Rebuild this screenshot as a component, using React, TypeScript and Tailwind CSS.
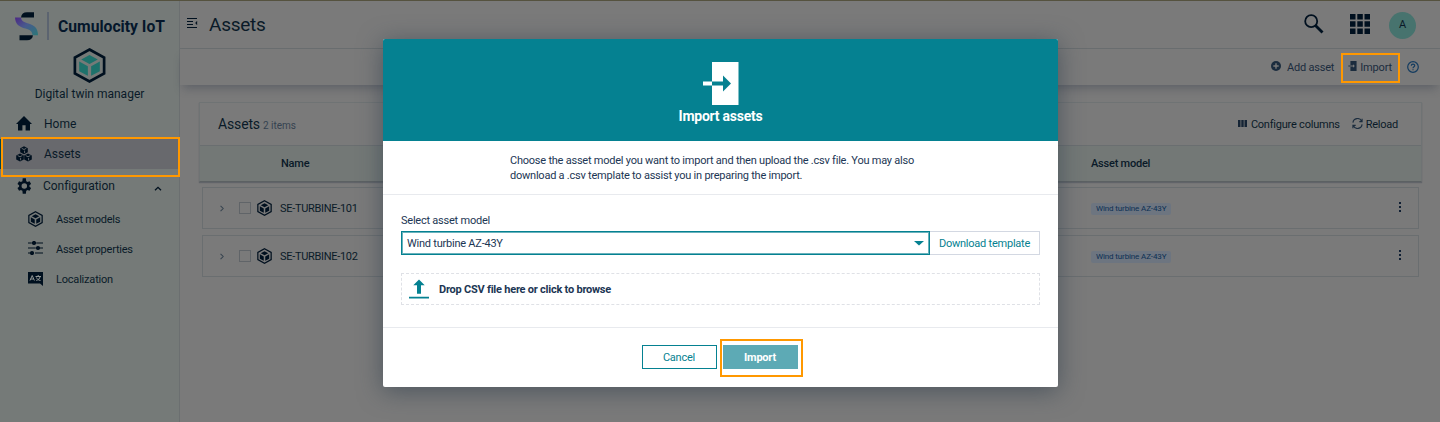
import React from "react";

function Cube({ className, fill = "#00101f", teal = false }: { className: string; fill?: string; teal?: boolean }) {
  const inner = teal ? "#1d716b" : fill;
  return (
    <svg viewBox="0 0 32 34" className={className} fill="none">
      <path d="M16 1.5 30.2 9.3V24.7L16 32.5 1.8 24.7V9.3Z" stroke={fill} strokeWidth="2.6" />
      <path d="M16 6.8 24 11.2 16 15.6 8 11.2Z" fill={inner} />
      <path d="M6 13.2 14.4 17.8V27L6 22.6Z" fill={inner} />
      <path d="M26 13.2 17.6 17.8V27L26 22.6Z" fill={inner} />
    </svg>
  );
}

function Logo() {
  return (
    <svg viewBox="0 0 24 29" className="h-[29px] w-[24px]">
      <defs>
        <linearGradient id="wave" x1="0" y1="0" x2="1" y2="1">
          <stop offset="0" stopColor="#4c2784" />
          <stop offset=".45" stopColor="#48598d" />
          <stop offset="1" stopColor="#2b7878" />
        </linearGradient>
      </defs>
      <path d="M6 5.5C6.3 2 8.5.3 12 .3H19V5.5Z" fill="#00101f" />
      <path d="M18 23.2C17.5 26.7 15.5 28.3 12 28.3H4.5V23.2Z" fill="#00101f" />
      <path d="M0 5.5H6C6.4 9 8.6 10 12.5 11.2 19.5 13 23 16.2 23 23.2H17.5C17.2 19.3 14.8 17.8 10.5 16.6 4 14.8.3 12.2 0 5.5Z" fill="url(#wave)" />
    </svg>
  );
}

function ImportIcon({ className, door, arrow }: { className: string; door: string; arrow: string }) {
  return (
    <svg viewBox="0 0 36 43" className={className}>
      <path d="M9 0H35.5V43H9Z" fill={door} />
      <path d="M0 19.5H9V23.5H0Z" fill={door} />
      <path d="M9 19.5H20V13.5L28 21.5 20 29.5V23.5H9Z" fill={arrow} />
    </svg>
  );
}

function Gear() {
  return (
    <svg viewBox="3 2 18 20" className="h-[16px] w-[15px]" fill="#00101f" preserveAspectRatio="none">
      <path d="M19.14 12.94a7 7 0 0 0 0-1.88l2.03-1.58-1.92-3.32-2.39.96a7 7 0 0 0-1.62-.94L14.88 2.4h-3.84l-.36 3.78c-.59.24-1.13.57-1.62.94l-2.39-.96-1.92 3.32 2.03 1.58a7 7 0 0 0 0 1.88l-2.03 1.58 1.92 3.32 2.39-.96c.5.38 1.03.7 1.62.94l.36 3.78h3.84l.36-3.78a7 7 0 0 0 1.62-.94l2.39.96 1.92-3.32ZM12.96 15.3a3.3 3.3 0 1 1 0-6.6 3.3 3.3 0 0 1 0 6.6Z" />
    </svg>
  );
}

function Sidebar() {
  return (
    <aside className="flex w-[180px] shrink-0 flex-col border-r border-[#6b6f70] bg-[#757a78] text-[#0a1a28]">
      <div className="mt-[12px] flex h-[28px] items-center pl-[15px]">
        <Logo />
        <div className="ml-[8px] h-[28px] w-[2px] bg-[#5c6470]" />
        <div className="ml-[9px] whitespace-nowrap pt-[2px] text-[15.7px] font-bold text-[#05172b]">Cumulocity IoT</div>
      </div>
      <div className="mt-[8px] flex flex-col items-center">
        <Cube className="h-[35px] w-[33px]" teal />
        <div className="mt-[2px] text-[12px] leading-[18px]">Digital twin manager</div>
      </div>
      <nav className="mt-[6px] text-[12px]">
        <div className="flex h-[30px] items-center pl-[16px]">
          <svg viewBox="0 0 16 15" className="mb-px h-[15px] w-[16px]" fill="#00101f"><path d="M8 0 16 8H14V14.5H9.6V9.3H6.4V14.5H2V8H0Z" /></svg>
          <span className="ml-[12px]">Home</span>
        </div>
        <div className="flex h-[30px] items-center bg-[#68696d] pl-[16px] shadow-[inset_1px_0_0_#04454f]">
          <svg viewBox="0 0 16 16" className="h-[16px] w-[16px]">
            {[[8, 4.2], [4, 11.5], [12, 11.5]].map(([x, y]) => (
              <g key={`${x}-${y}`} transform={`translate(${x} ${y})`}>
                <path d="M0-4 3.8-2V2L0 4-3.8 2V-2Z" fill="#00101f" />
                <path d="M-2.3-1.9 0-.7 2.3-1.9M.6.4V2.8" fill="none" stroke="#777b7c" strokeWidth=".8" />
              </g>
            ))}
          </svg>
          <span className="ml-[12px]">Assets</span>
        </div>
        <div className="mt-[2px] flex h-[30px] items-center pl-[16px]">
          <Gear />
          <span className="ml-[12px] tracking-[-0.05px]">Configuration</span>
          <svg viewBox="0 0 8 5" className="ml-auto mr-[17px] mt-[5px] h-[5px] w-[8px]" fill="none" stroke="#00101f" strokeWidth="1.3"><path d="M1 4.3 4 1.3 7 4.3" /></svg>
        </div>
        <div className="mt-[3px] text-[11px] tracking-[-0.24px]">
          <div className="flex h-[30px] items-center pl-[28px]">
            <Cube className="mb-px h-[16px] w-[15px]" />
            <span className="ml-[13px] pt-[2px]">Asset models</span>
          </div>
          <div className="flex h-[30px] items-center pl-[28px]">
            <svg viewBox="0 0 15 14" className="mb-[2px] h-[14px] w-[15px]" stroke="#00101f" fill="#00101f" strokeWidth="1.2">
              <path d="M0 2H3M9 2H15M0 7H7M12 7H15M0 12H2M7 12H15" /><circle cx="6" cy="2" r="1.5" /><circle cx="10" cy="7" r="1.5" /><circle cx="4" cy="12" r="1.5" />
              <path d="M3 2H9M7 7H12" strokeWidth=".8" />
            </svg>
            <span className="ml-[13px] pt-[2px]">Asset properties</span>
          </div>
          <div className="flex h-[30px] items-center pl-[28px]">
            <svg viewBox="0 0 15 14" className="h-[14px] w-[15px]">
              <path d="M0 0H15V14L12 11.5H0Z" fill="#00101f" />
              <path d="M2 8.5 4.2 3.5 6.4 8.5M2.8 7H5.6M7.5 4.5H13M10.2 3V4.5M8.3 8.5C10.5 7.8 11.8 6.5 12 4.8M8.5 5.5C9 7 10.5 8.3 12.5 8.5" fill="none" stroke="#929796" strokeWidth="1" />
            </svg>
            <span className="ml-[13px] pt-[2px] tracking-[-0.2px]">Localization</span>
          </div>
        </div>
      </nav>
    </aside>
  );
}

function AssetRow({ name }: { name: string }) {
  return (
    <div className="mx-[3px] flex h-[42px] items-center border border-[#6a6e70] text-[11px] text-[#0a1a28]">
      <svg viewBox="0 0 5 8" className="ml-[17px] h-[7px] w-[4px]" fill="none" stroke="#36434f" strokeWidth="1.3"><path d="M.7.7 4 4 .7 7.3" /></svg>
      <div className="ml-[15px] h-[12px] w-[12px] border border-[#606468]" />
      <Cube className="mb-px ml-[6px] h-[16px] w-[15px]" />
      <span className="ml-[8px] w-[811px] pt-[2px] tracking-[-0.3px]">{name}</span>
      <span className="mt-[2px] rounded-[2px] bg-[#6d7580] px-[5px] text-[8px] leading-[12px] tracking-[-0.13px] text-[#0c3054]">Wind turbine AZ-43Y</span>
      <svg viewBox="0 0 2 10" className="mb-[2px] ml-auto mr-[17px] h-[10px] w-[2px]" fill="#101f33"><path d="M0 0H2V2H0ZM0 4H2V6H0ZM0 8H2V10H0Z" /></svg>
    </div>
  );
}

function Page() {
  return (
    <main className="flex min-w-0 flex-1 flex-col text-[#0a1a28]">
      <header className="flex h-[49px] items-center border-b border-[#6a6e70] pl-[7px] pr-[24px]">
        <svg viewBox="0 0 11 10" className="mb-[3px] h-[10px] w-[11px]" stroke="#00101f" fill="#00101f" strokeWidth="1"><path d="M0 .5H10M0 3.5H6M0 6.5H6M0 9.5H10" /><path d="M10 3.2V6.8L8.4 5Z" strokeWidth=".3" /></svg>
        <h1 className="ml-[11px] text-[19px] font-normal leading-none tracking-[-0.25px]">Assets</h1>
        <svg viewBox="0 0 20 20" className="ml-auto h-[20px] w-[20px]" fill="none" stroke="#00101f"><circle cx="7.2" cy="7.2" r="6" strokeWidth="1.8" /><path d="M11.5 11.5 18.5 18.5" strokeWidth="2.8" /></svg>
        <svg viewBox="0 0 20 20" className="ml-[26px] h-[20px] w-[20px]" fill="#00101f"><path d="M0 0H5.5V5.5H0ZM7.3 0H12.8V5.5H7.3ZM14.5 0H20V5.5H14.5ZM0 7.3H5.5V12.8H0ZM7.3 7.3H12.8V12.8H7.3ZM14.5 7.3H20V12.8H14.5ZM0 14.5H5.5V20H0ZM7.3 14.5H12.8V20H7.3ZM14.5 14.5H20V20H14.5Z" /></svg>
        <div className="ml-[19px] mt-[3px] flex h-[27px] w-[27px] items-center justify-center rounded-full bg-[#47736e] text-[11px]">A</div>
      </header>
      <div className="flex h-[36px] items-center justify-end pr-[21px] text-[11px] text-[#1b2c3e] shadow-[0_6px_10px_-3px_rgba(40,50,65,0.35)]">
        <svg viewBox="0 0 10 10" className="mb-[2px] h-[10px] w-[10px]"><circle cx="5" cy="5" r="5" fill="#1b2c3e" /><path d="M5 2.3V7.7M2.3 5H7.7" stroke="#7a7a7a" strokeWidth="1.4" /></svg>
        <span className="ml-[6px] pt-[2px] tracking-[-0.2px]">Add asset</span>
        <ImportIcon className="mb-[2px] ml-[14px] h-[10px] w-[9px]" door="#1b2c3e" arrow="#7a7a7a" />
        <span className="ml-[3px] pt-[2px] tracking-[-0.15px]">Import</span>
        <svg viewBox="0 0 12 12" className="ml-[15px] h-[12px] w-[12px]" fill="none" stroke="#143c60" strokeWidth="1.2"><circle cx="6" cy="6" r="5.3" /><path d="M4.3 4.8C4.3 2.5 7.7 2.5 7.7 4.7 7.7 5.8 6 5.8 6 7.2M6 8.2V9.3" /></svg>
      </div>
      <section className="mx-[19px] mt-[17px] flex w-[1223px] flex-col">
        <div className="flex h-[80px] flex-col border border-[#6f7374] border-b-[#5c6163] shadow-[0_1px_1px_rgba(40,50,65,0.3)]">
          <div className="flex h-[42px] items-center pl-[18px] pr-[23px]">
            <h2 className="text-[14px] tracking-[-0.15px]">Assets</h2>
            <span className="ml-[3px] mt-[3px] text-[10px] text-[#354250]">2 items</span>
            <div className="ml-auto flex items-center text-[11px]">
              <svg viewBox="0 0 9 7" className="mb-[2px] h-[7px] w-[9px]" fill="#152435"><path d="M0 0H2.5V7H0ZM3.3 0H5.7V7H3.3ZM6.5 0H9V7H6.5Z" /></svg>
              <span className="ml-[4px] pt-[2px] tracking-[-0.22px]">Configure columns</span>
              <svg viewBox="0 0 12 12" className="mb-[1px] ml-[12px] h-[11px] w-[11px]" fill="none" stroke="#1b2c3e" strokeWidth="1.2"><path d="M1 5A5 5 0 0 1 10.5 3.5M11 .8V4H8M11 7A5 5 0 0 1 1.5 8.5M1 11.2V8H4" /></svg>
              <span className="ml-[3px] pt-[2px] tracking-[-0.25px]">Reload</span>
            </div>
          </div>
          <div className="flex flex-1 items-center border-t border-[#6a6e70] bg-[#737876] pl-[81px] pt-[1px] text-[11px] font-medium tracking-[-0.22px]">
            <span className="w-[810px]">Name</span><span>Asset model</span>
          </div>
        </div>
        <div className="mt-[5px] flex flex-col gap-[6px]">
          <AssetRow name="SE-TURBINE-101" />
          <AssetRow name="SE-TURBINE-102" />
        </div>
      </section>
    </main>
  );
}

function ImportDialog() {
  return (
    <div role="dialog" className="absolute left-[383px] top-[39px] flex h-[348px] w-[675px] flex-col overflow-hidden rounded-[2px] bg-white text-[11px] tracking-[-0.23px] text-[#1c3654] shadow-[0_4px_24px_rgba(45,60,75,0.6)]">
      <div className="flex h-[102px] flex-col items-center bg-[#058191] pt-[23px] text-white">
        <ImportIcon className="h-[43px] w-[36px]" door="#ffffff" arrow="#058191" />
        <h3 className="mt-[2px] text-[14px] font-bold leading-[18px] tracking-[-0.25px]">Import assets</h3>
      </div>
      <p className="h-[54px] border-b border-[#e8eaee] pl-[127px] pt-[12px] leading-[15px]">
        Choose the asset model you want to import and then upload the .csv file. You may also<br />
        download a .csv template to assist you in preparing the import.
      </p>
      <div className="flex h-[132px] flex-col px-[18px] pt-[18px]">
        <label className="leading-[15px]">Select asset model</label>
        <div className="mt-[3px] flex h-[24px]">
          <div className="flex w-[529px] items-center justify-between border border-[#058191] pl-[5px] pr-[5px] shadow-[inset_0_0_0_1px_#69b2bc]">
            <span className="pt-[2px]">Wind turbine AZ-43Y</span>
            <svg viewBox="0 0 10 5" className="h-[5px] w-[10px]" fill="#058191"><path d="M0 0H10L5 4.5Z" /></svg>
          </div>
          <button className="flex-1 border border-l-0 border-[#d3d8e2] pt-[2px] text-[#058191]">Download template</button>
        </div>
        <div className="mt-[18px] flex h-[32px] items-center border border-dashed border-[#dfe1e6] pl-[7px]">
          <svg viewBox="0 0 20 20" className="h-[20px] w-[20px]" fill="#058191"><path d="M10 .5 15.7 6.2H12V14.7H8V6.2H4.3ZM0 17.7H20V19.5H0Z" /></svg>
          <span className="ml-[10px] pt-[2px] font-bold">Drop CSV file here or click to browse</span>
        </div>
      </div>
      <div className="flex flex-1 justify-center gap-[6px] border-t border-[#e8eaee] pr-[2px] pt-[17px]">
        <button className="h-[24px] w-[75px] border border-[#058191] pt-[2px] text-[#058191]">Cancel</button>
        <button className="h-[24px] w-[75px] bg-[#5daab5] pt-[2px] font-bold text-white">Import</button>
      </div>
    </div>
  );
}

export default function App() {
  return (
    <div className="relative flex h-[422px] w-[1440px] overflow-hidden bg-[#7a7a7a] font-['Roboto',sans-serif]">
      <div className="absolute left-0 top-0 h-px w-full bg-[#55523f]" />
      <Sidebar />
      <Page />
      <ImportDialog />
      <div className="absolute left-[1px] top-[137px] h-[40px] w-[179px] border-2 border-[#ff9800]" />
      <div className="absolute left-[1341px] top-[53px] h-[30px] w-[59px] border-2 border-[#ff9800]" />
      <div className="absolute left-[720px] top-[339px] h-[38px] w-[83px] border-2 border-[#ff9800]" />
    </div>
  );
}
